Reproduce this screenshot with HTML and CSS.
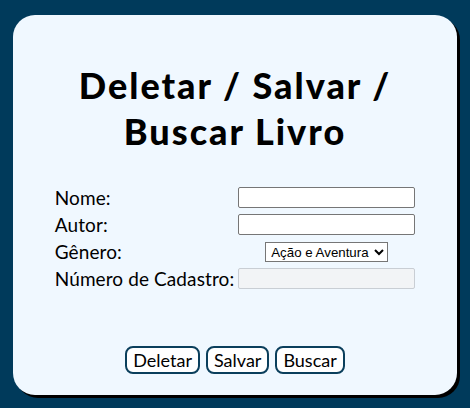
FILE: index.html
```html
<!DOCTYPE html>
<html lang="pt">
<head>
<meta charset="utf-8">
<link rel="stylesheet" href="styles.css">
</head>
<body>
<main class="card">
  <h1 class="title">Deletar / Salvar / Buscar Livro</h1>
  <form class="form">
    <table class="fields">
      <tr><td class="label">Nome:</td><td class="ctrl"><input class="text" type="text"></td></tr>
      <tr><td class="label">Autor:</td><td class="ctrl"><input class="text" type="text"></td></tr>
      <tr><td class="label">Gênero:</td><td class="ctrl center"><select class="genre"><option>Ação e Aventura</option></select></td></tr>
      <tr><td class="label">Número de Cadastro:</td><td class="ctrl"><input class="text" type="text" disabled></td></tr>
    </table>
    <div class="actions">
      <button type="button" class="btn">Deletar</button>
      <button type="button" class="btn">Salvar</button>
      <button type="button" class="btn">Buscar</button>
    </div>
  </form>
</main>
</body>
</html>
```
FILE: styles.css
```css
html, body { margin: 0; padding: 0; }
body {
  background: #003a5b;
  width: 470px;
  height: 408px;
  padding: 15px 0 0 13px;
  box-sizing: border-box;
  font-family: "Lato", "Noto Sans", sans-serif;
  color: #000;
}
.card {
  width: 444px;
  height: 380px;
  box-sizing: border-box;
  background: #f0f8ff;
  border-radius: 22px;
  box-shadow: 3px 3px 0 #000;
  padding: 47px 0 0 0;
  display: flex;
  flex-direction: column;
  align-items: center;
}
.title {
  margin: 0;
  font-size: 36px;
  line-height: 46px;
  font-weight: 900;
  letter-spacing: 2px;
  text-align: center;
  width: 390px;
}
.form {
  margin-top: 29px;
  display: flex;
  flex-direction: column;
  align-items: center;
}
.fields {
  border-spacing: 2px;
  border-collapse: separate;
}
.label {
  font-size: 19px;
  padding: 0 2px 0 0;
  height: 25px;
  line-height: 22px;
  letter-spacing: 0.1px;
}
.ctrl { padding: 0; vertical-align: middle; }
.center { text-align: center; }
.text {
  display: block;
  width: 177px;
  height: 21px;
  box-sizing: border-box;
  border: 1px solid #767676;
  border-radius: 2px;
  background: #fff;
  margin: 0;
  padding: 1px 2px;
}
.text:disabled {
  background: #f2f4f6;
  border-color: #c9ced4;
}
.genre {
  font-family: "Liberation Sans", Arial, sans-serif;
  font-size: 13.3px;
  height: 20px;
  border: 1px solid #767676;
  border-radius: 0;
  background: #fff;
  color: #000;
  padding: 0 1px;
}
.actions {
  margin-top: 53px;
  display: flex;
  gap: 6px;
}
.btn {
  font-family: "Lato", "Noto Sans", sans-serif;
  font-size: 18px;
  background: #fff;
  color: #000;
  border: 2px solid #0b3f5c;
  border-radius: 8px;
  height: 28px;
  padding: 0 6px;
  line-height: 22px;
}
```
